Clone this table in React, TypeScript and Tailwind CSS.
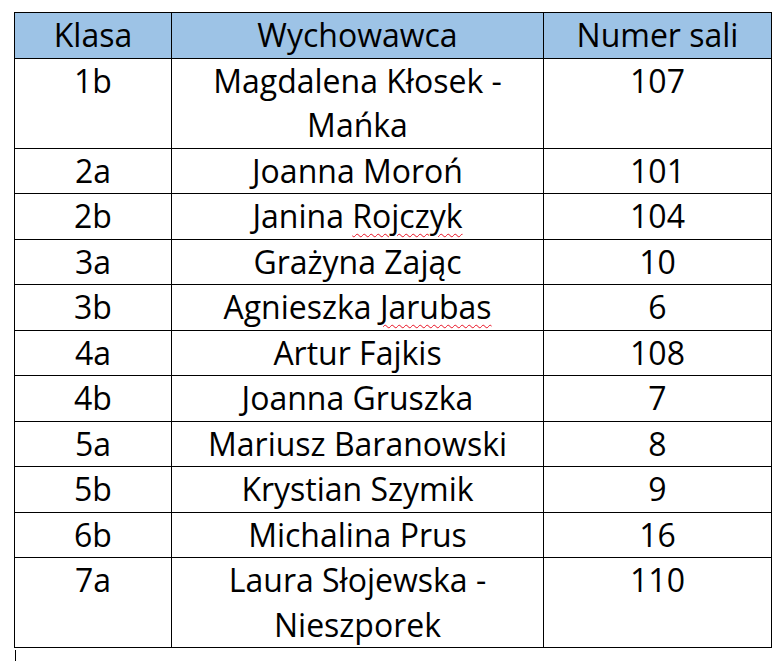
import React from 'react';

type Row = { klasa: string; wych: React.ReactNode; sala: string };

const rows: Row[] = [
    { klasa: '1b', wych: <>Magdalena Kłosek -<br />Mańka</>, sala: '107' },
    { klasa: '2a', wych: 'Joanna Moroń', sala: '101' },
    {
        klasa: '2b',
        wych: <>Janina <span className="underline decoration-wavy decoration-[#e81123] decoration-1 underline-offset-[5px]">Rojczyk</span></>,
        sala: '104',
    },
    { klasa: '3a', wych: 'Grażyna Zając', sala: '10' },
    {
        klasa: '3b',
        wych: <>Agnieszka <span className="underline decoration-wavy decoration-[#e81123] decoration-1 underline-offset-[5px]">Jarubas</span></>,
        sala: '6',
    },
    { klasa: '4a', wych: 'Artur Fajkis', sala: '108' },
    { klasa: '4b', wych: 'Joanna Gruszka', sala: '7' },
    { klasa: '5a', wych: 'Mariusz Baranowski', sala: '8' },
    { klasa: '5b', wych: 'Krystian Szymik', sala: '9' },
    { klasa: '6b', wych: 'Michalina Prus', sala: '16' },
    { klasa: '7a', wych: <>Laura Słojewska -<br />Nieszporek</>, sala: '110' },
];

const cell = 'border border-black align-top text-center px-[7px] py-0 whitespace-nowrap';

export default function App() {
    return (
        <div className="min-h-screen bg-white pl-[14px] pt-[12px] text-black" style={{ fontFamily: '"Open Sans", "Noto Sans", sans-serif' }}>
            <table className="border-collapse table-fixed w-[757px] text-[32px] leading-[44.5px]">
                <colgroup>
                    <col className="w-[157px]" />
                    <col className="w-[372px]" />
                    <col className="w-[228px]" />
                </colgroup>
                <thead>
                    <tr className="bg-[#9dc3e6]">
                        <th className={`${cell} font-normal`}>Klasa</th>
                        <th className={`${cell} font-normal`}>Wychowawca</th>
                        <th className={`${cell} font-normal`}>Numer sali</th>
                    </tr>
                </thead>
                <tbody>
                    {rows.map((r) => (
                        <tr key={r.klasa}>
                            <td className={cell}>{r.klasa}</td>
                            <td className={cell}>{r.wych}</td>
                            <td className={cell}>{r.sala}</td>
                        </tr>
                    ))}
                </tbody>
            </table>
            <div className="ml-px mt-[2px] h-[11px] w-px bg-black" />
        </div>
    );
}
